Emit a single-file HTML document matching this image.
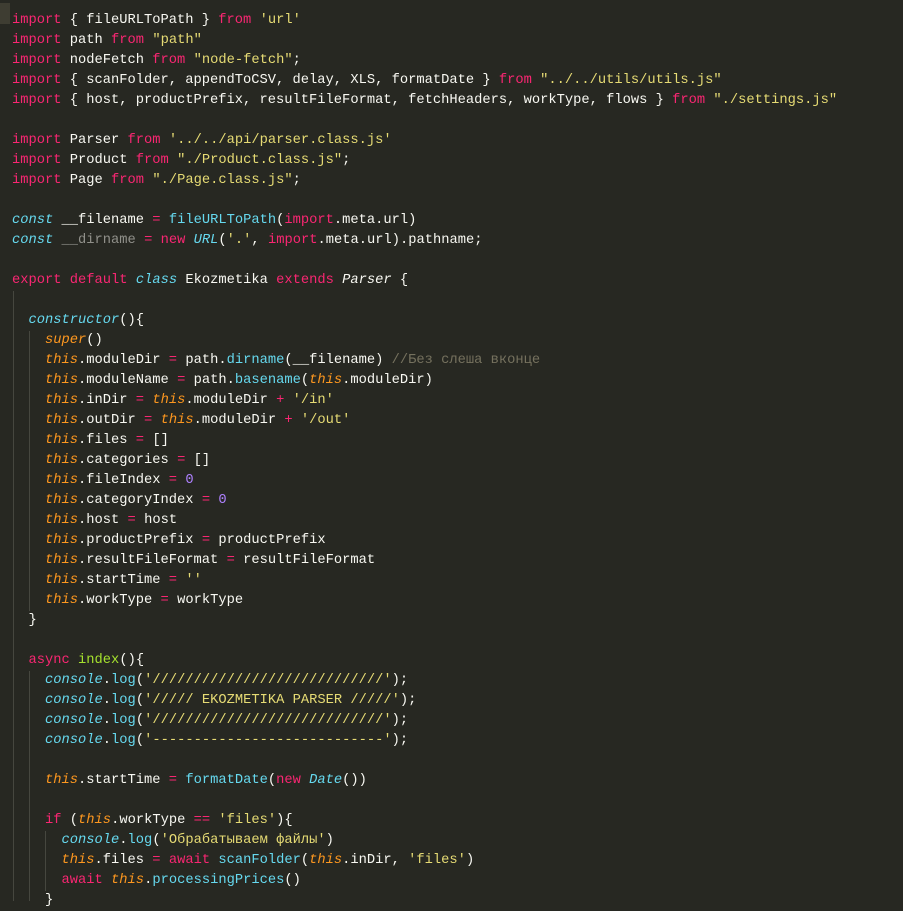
<!DOCTYPE html>
<html><head><meta charset="utf-8"><style>
html,body{margin:0;padding:0;background:#272822;width:903px;height:899px;overflow:hidden}
pre{position:absolute;left:12px;top:11px;margin:0;font-family:"Liberation Mono","DejaVu Sans Mono",monospace;font-size:13.75px;line-height:20px;color:#f8f8f2;white-space:pre}
.k{color:#f92672}.s{color:#e6db74}.c{color:#66d9ef}.i{font-style:italic}.o{color:#fd971f;font-style:italic}.n{color:#ae81ff}.g{color:#a6e22e}.cm{color:#75715e}.d{color:#90908a}
.gd{position:absolute;width:1px;background:#46473f}
</style></head><body>
<div style="position:absolute;left:0;top:3px;width:10px;height:21px;background:#3e3d32"></div>
<div class="gd" style="left:13px;top:291px;height:610px"></div>
<div class="gd" style="left:29px;top:331px;height:280px"></div>
<div class="gd" style="left:29px;top:671px;height:230px"></div>
<div class="gd" style="left:45px;top:831px;height:60px"></div>
<pre><span class="k">import</span> { fileURLToPath } <span class="k">from</span> <span class="s">'url'</span>
<span class="k">import</span> path <span class="k">from</span> <span class="s">"path"</span>
<span class="k">import</span> nodeFetch <span class="k">from</span> <span class="s">"node-fetch"</span>;
<span class="k">import</span> { scanFolder, appendToCSV, delay, XLS, formatDate } <span class="k">from</span> <span class="s">"../../utils/utils.js"</span>
<span class="k">import</span> { host, productPrefix, resultFileFormat, fetchHeaders, workType, flows } <span class="k">from</span> <span class="s">"./settings.js"</span>

<span class="k">import</span> Parser <span class="k">from</span> <span class="s">'../../api/parser.class.js'</span>
<span class="k">import</span> Product <span class="k">from</span> <span class="s">"./Product.class.js"</span>;
<span class="k">import</span> Page <span class="k">from</span> <span class="s">"./Page.class.js"</span>;

<span class="c i">const</span> __filename <span class="k">=</span> <span class="c">fileURLToPath</span>(<span class="k">import</span>.meta.url)
<span class="c i">const</span> <span class="d">__dirname</span> <span class="k">=</span> <span class="k">new</span> <span class="c i">URL</span>(<span class="s">'.'</span>, <span class="k">import</span>.meta.url).pathname;

<span class="k">export</span> <span class="k">default</span> <span class="c i">class</span> Ekozmetika <span class="k">extends</span> <span class="i">Parser</span> {

  <span class="c i">constructor</span>(){
    <span class="o">super</span>()
    <span class="o">this</span>.moduleDir <span class="k">=</span> path.<span class="c">dirname</span>(__filename) <span class="cm">//Без слеша вконце</span>
    <span class="o">this</span>.moduleName <span class="k">=</span> path.<span class="c">basename</span>(<span class="o">this</span>.moduleDir)
    <span class="o">this</span>.inDir <span class="k">=</span> <span class="o">this</span>.moduleDir <span class="k">+</span> <span class="s">'/in'</span>
    <span class="o">this</span>.outDir <span class="k">=</span> <span class="o">this</span>.moduleDir <span class="k">+</span> <span class="s">'/out'</span>
    <span class="o">this</span>.files <span class="k">=</span> []
    <span class="o">this</span>.categories <span class="k">=</span> []
    <span class="o">this</span>.fileIndex <span class="k">=</span> <span class="n">0</span>
    <span class="o">this</span>.categoryIndex <span class="k">=</span> <span class="n">0</span>
    <span class="o">this</span>.host <span class="k">=</span> host
    <span class="o">this</span>.productPrefix <span class="k">=</span> productPrefix
    <span class="o">this</span>.resultFileFormat <span class="k">=</span> resultFileFormat
    <span class="o">this</span>.startTime <span class="k">=</span> <span class="s">''</span>
    <span class="o">this</span>.workType <span class="k">=</span> workType
  }

  <span class="k">async</span> <span class="g">index</span>(){
    <span class="c i">console</span>.<span class="c">log</span>(<span class="s">'////////////////////////////'</span>);
    <span class="c i">console</span>.<span class="c">log</span>(<span class="s">'///// EKOZMETIKA PARSER /////'</span>);
    <span class="c i">console</span>.<span class="c">log</span>(<span class="s">'////////////////////////////'</span>);
    <span class="c i">console</span>.<span class="c">log</span>(<span class="s">'----------------------------'</span>);

    <span class="o">this</span>.startTime <span class="k">=</span> <span class="c">formatDate</span>(<span class="k">new</span> <span class="c i">Date</span>())

    <span class="k">if</span> (<span class="o">this</span>.workType <span class="k">==</span> <span class="s">'files'</span>){
      <span class="c i">console</span>.<span class="c">log</span>(<span class="s">'Обрабатываем файлы'</span>)
      <span class="o">this</span>.files <span class="k">=</span> <span class="k">await</span> <span class="c">scanFolder</span>(<span class="o">this</span>.inDir, <span class="s">'files'</span>)
      <span class="k">await</span> <span class="o">this</span>.<span class="c">processingPrices</span>()
    }
</pre>
</body></html>
